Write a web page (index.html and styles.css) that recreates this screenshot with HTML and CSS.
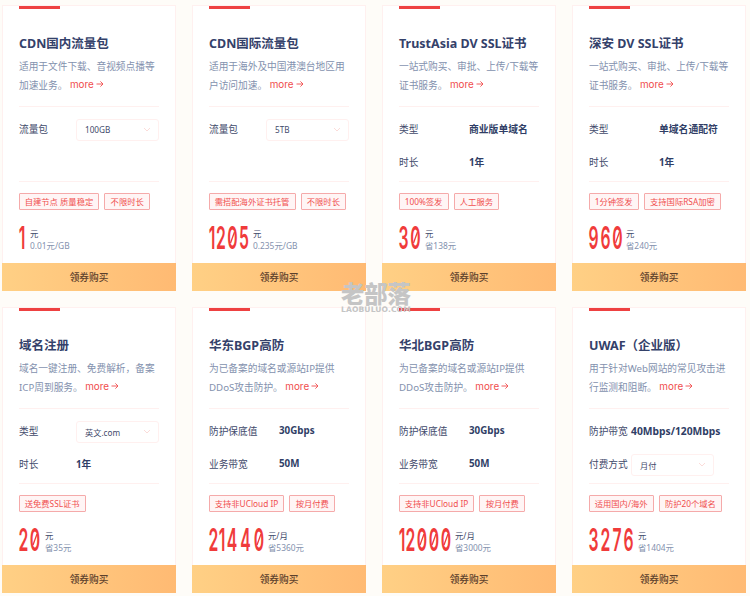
FILE: index.html
```html
<!DOCTYPE html>
<html lang="zh-CN">
<head>
<meta charset="utf-8">
<title>产品特惠</title>
<link rel="stylesheet" href="styles.css">
</head>
<body>
<svg class="defs" width="0" height="0"><defs>
<symbol id="arrow" viewBox="0 0 8 8"><path d="M0.5 4H7M4.4 1.4L7 4L4.4 6.6"/></symbol>
<symbol id="chevron" viewBox="0 0 8 5"><path d="M1 1L4 4L7 1"/></symbol>
</defs></svg>
<main class="grid">
<article class="card"><div class="body">
<h2>CDN国内流量包</h2>
<p class="desc">适用于文件下载、音视频点播等<br>加速业务。<a class="more">more<svg><use href="#arrow"/></svg></a></p>
<div class="specs"><div class="row"><span class="label">流量包</span><span class="select">100GB<svg><use href="#chevron"/></svg></span></div></div>
<div class="tags"><span>自建节点 质量稳定</span><span>不限时长</span></div>
<div class="price"><svg width="11" height="23"><text transform="scale(.5 1)" x="6" y="23">1</text></svg><div class="unit"><b>元</b><i>0.01元/GB</i></div></div>
</div><div class="buy">领券购买</div></article>

<article class="card"><div class="body">
<h2>CDN国际流量包</h2>
<p class="desc">适用于海外及中国港澳台地区用<br>户访问加速。<a class="more">more<svg><use href="#arrow"/></svg></a></p>
<div class="specs"><div class="row"><span class="label">流量包</span><span class="select">5TB<svg><use href="#chevron"/></svg></span></div></div>
<div class="tags"><span>需搭配海外证书托管</span><span>不限时长</span></div>
<div class="price"><svg width="44" height="23"><text transform="scale(.5 1)" x="6 24 47 70" y="23">1205</text><path d="M21.5 17L25.5 6"/></svg><div class="unit"><b>元</b><i>0.235元/GB</i></div></div>
</div><div class="buy">领券购买</div></article>

<article class="card"><div class="body">
<h2>TrustAsia DV SSL证书</h2>
<p class="desc">一站式购买、审批、上传/下载等<br>证书服务。<a class="more">more<svg><use href="#arrow"/></svg></a></p>
<div class="specs wide"><div class="row"><span class="label">类型</span><strong>商业版单域名</strong></div><div class="row"><span class="label">时长</span><strong>1年</strong></div></div>
<div class="tags"><span>100%签发</span><span>人工服务</span></div>
<div class="price"><svg width="26" height="23"><text transform="scale(.5 1)" x="9 33" y="23">30</text><path d="M14.5 17L18.5 6"/></svg><div class="unit"><b>元</b><i>省138元</i></div></div>
</div><div class="buy">领券购买</div></article>

<article class="card"><div class="body">
<h2>深安 DV SSL证书</h2>
<p class="desc">一站式购买、审批、上传/下载等<br>证书服务。<a class="more">more<svg><use href="#arrow"/></svg></a></p>
<div class="specs wide"><div class="row"><span class="label">类型</span><strong>单域名通配符</strong></div><div class="row"><span class="label">时长</span><strong>1年</strong></div></div>
<div class="tags"><span>1分钟签发</span><span>支持国际RSA加密</span></div>
<div class="price"><svg width="37" height="23"><text transform="scale(.5 1)" x="9 33 57" y="23">960</text><path d="M26.5 17L30.5 6"/></svg><div class="unit"><b>元</b><i>省240元</i></div></div>
</div><div class="buy">领券购买</div></article>

<article class="card"><div class="body">
<h2>域名注册</h2>
<p class="desc">域名一键注册、免费解析，备案<br>ICP周到服务。<a class="more">more<svg><use href="#arrow"/></svg></a></p>
<div class="specs"><div class="row"><span class="label">类型</span><span class="select">英文.com<svg><use href="#chevron"/></svg></span></div><div class="row"><span class="label">时长</span><strong>1年</strong></div></div>
<div class="tags"><span>送免费SSL证书</span></div>
<div class="price"><svg width="26" height="23"><text transform="scale(.5 1)" x="9 32" y="23">20</text><path d="M14 17L18 6"/></svg><div class="unit"><b>元</b><i>省35元</i></div></div>
</div><div class="buy">领券购买</div></article>

<article class="card"><div class="body">
<h2>华东BGP高防</h2>
<p class="desc">为已备案的域名或源站IP提供<br>DDoS攻击防护。<a class="more">more<svg><use href="#arrow"/></svg></a></p>
<div class="specs wide"><div class="row"><span class="label">防护保底值</span><strong>30Gbps</strong></div><div class="row"><span class="label">业务带宽</span><strong>50M</strong></div></div>
<div class="tags"><span>支持非UCloud IP</span><span>按月付费</span></div>
<div class="price"><svg width="59" height="23"><text transform="scale(.5 1)" x="9 26 46 73 100" y="23">21440</text><path d="M48 17L52 6"/></svg><div class="unit"><b>元/月</b><i>省5360元</i></div></div>
</div><div class="buy">领券购买</div></article>

<article class="card"><div class="body">
<h2>华北BGP高防</h2>
<p class="desc">为已备案的域名或源站IP提供<br>DDoS攻击防护。<a class="more">more<svg><use href="#arrow"/></svg></a></p>
<div class="specs wide"><div class="row"><span class="label">防护保底值</span><strong>30Gbps</strong></div><div class="row"><span class="label">业务带宽</span><strong>50M</strong></div></div>
<div class="tags"><span>支持非UCloud IP</span><span>按月付费</span></div>
<div class="price"><svg width="56" height="23"><text transform="scale(.5 1)" x="6 23 46 70 94" y="23">12000</text><path d="M21 17L25 6M33 17L37 6M45 17L49 6"/></svg><div class="unit"><b>元/月</b><i>省3000元</i></div></div>
</div><div class="buy">领券购买</div></article>

<article class="card"><div class="body">
<h2>UWAF（企业版）</h2>
<p class="desc">用于针对Web网站的常见攻击进<br>行监测和阻断。<a class="more">more<svg><use href="#arrow"/></svg></a></p>
<div class="specs tight"><div class="row"><span class="label">防护带宽</span><strong>40Mbps/120Mbps</strong></div><div class="row"><span class="label">付费方式</span><span class="select">月付<svg><use href="#chevron"/></svg></span></div></div>
<div class="tags"><span>适用国内/海外</span><span>防护20个域名</span></div>
<div class="price"><svg width="49" height="23"><text transform="scale(.5 1)" x="9 33 56 79" y="23">3276</text></svg><div class="unit"><b>元</b><i>省1404元</i></div></div>
</div><div class="buy">领券购买</div></article>
</main>
<div class="watermark"><div class="mark-cn">老部落</div><div class="mark-en">LAOBULUO.COM</div></div>
</body>
</html>
```
FILE: styles.css
```css
* { box-sizing: border-box; }
body {
  margin: 0;
  width: 750px;
  height: 596px;
  padding: 5px 0 0 2px;
  overflow: hidden;
  background: #fefcf8;
  color: #3f4a6b;
  font-family: "Noto Sans", "Noto Sans CJK SC", sans-serif;
}
.defs { position: absolute; }
.grid {
  display: grid;
  grid-template-columns: repeat(4, 174px);
  grid-auto-rows: 286px;
  gap: 16px;
}
.card { display: flex; flex-direction: column; }
.body {
  height: 258px;
  padding: 0 16px;
  background: #fff;
  border: 1px solid #fff0ef;
  border-bottom: 0;
}
.body::before {
  content: "";
  display: block;
  width: 41px;
  height: 3px;
  background: #ee4141;
}
h2 {
  margin: 25px 0 0;
  height: 22px;
  font-size: 12.5px;
  line-height: 20px;
  font-weight: 700;
  color: #34416a;
  white-space: nowrap;
}
.desc {
  margin: 0;
  height: 50px;
  padding-top: 1px;
  font-size: 9.7px;
  line-height: 19px;
  color: #8391ae;
  white-space: nowrap;
}
.more {
  display: inline-flex;
  align-items: center;
  gap: 2px;
  height: 10px;
  margin-left: 2.5px;
  font-family: Inter, sans-serif;
  font-size: 9.9px;
  color: #f04d4d;
  vertical-align: 1.5px;
}
.more svg { width: 8px; height: 8px; fill: none; stroke: #f04d4d; stroke-width: .9; }
.specs {
  height: 76px;
  width: 140px;
  padding-top: 6px;
  border-top: 1px solid #fff0ef;
  border-bottom: 1px solid #fff0ef;
}
.row { display: flex; align-items: center; height: 33px; font-size: 9.7px; white-space: nowrap; }
.row strong { padding-bottom: 2px; color: #303e66; }
.wide strong { font-size: 9.8px; }
.tight strong { font-size: 10.3px; }
.label { flex: none; width: 57px; padding-bottom: 2px; }
.wide .label { width: 70px; }
.tight .label { width: 42px; }
.select {
  display: flex;
  flex: none;
  align-items: center;
  justify-content: space-between;
  width: 83px;
  height: 22px;
  padding: 0 7px 0 8px;
  border: 1px solid #fff0ef;
  border-radius: 3px;
  font-size: 8.2px;
}
.select svg { width: 8px; height: 5px; fill: none; stroke: #fbd8d5; stroke-width: .9; }
.tags { display: flex; gap: 5px; margin-top: 11px; margin-left: -0.5px; }
.tags span {
  height: 17px;
  padding: 0 5.2px;
  border: 1px solid #f5aaaa;
  border-radius: 1px;
  background: #fff5f5;
  color: #f04f4f;
  font-size: 8.3px;
  line-height: 15px;
  white-space: nowrap;
}
.price { display: flex; margin-top: 16px; height: 23px; }
.price svg { flex: none; overflow: visible; }
.price text {
  font-family: Inter, sans-serif;
  font-size: 31.5px;
  font-weight: 600;
  text-anchor: middle;
  fill: #f03b3b;
}
.price path { fill: none; stroke: #f03b3b; stroke-width: 1.3; }
.unit { margin-top: 2px; font-size: 8.4px; line-height: 11.5px; white-space: nowrap; }
.unit b, .unit i { display: block; font-style: normal; font-weight: 400; }
.unit i { color: #8391ae; }
.buy {
  height: 28px;
  background: linear-gradient(90deg, #ffd085, #ffba73);
  color: #5c402c;
  font-size: 9.7px;
  font-weight: 500;
  line-height: 30px;
  text-align: center;
}
.watermark {
  position: absolute;
  left: 341px;
  top: 284px;
  width: 72px;
  color: #c5c5c5;
  white-space: nowrap;
}
.mark-cn { font-size: 23.3px; font-weight: 900; line-height: 21px; height: 21px; }
.mark-en { font-family: "DejaVu Sans", sans-serif; font-size: 7.6px; font-weight: 700; letter-spacing: .1px; line-height: 10px; }
```
